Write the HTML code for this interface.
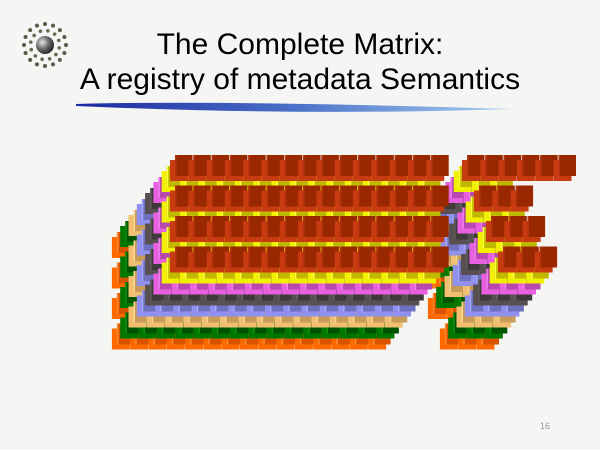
<!DOCTYPE html>
<html><head><meta charset="utf-8"><style>
html,body{margin:0;padding:0;background:#f5f5f3;width:600px;height:450px;overflow:hidden;font-family:"Liberation Sans",sans-serif}
.t{position:absolute;left:0;width:600px;text-align:center;font-size:30px;color:#000;line-height:33px}
</style></head><body>
<svg width="600" height="450" style="position:absolute;left:0;top:0">
<defs>
<radialGradient id="sp" cx="0.35" cy="0.35" r="0.7"><stop offset="0" stop-color="#e8e8e8"/><stop offset="0.5" stop-color="#707070"/><stop offset="1" stop-color="#202020"/></radialGradient>
<linearGradient id="sw" x1="0" x2="1"><stop offset="0" stop-color="#1c2aa0"/><stop offset="0.5" stop-color="#4a70c8"/><stop offset="1" stop-color="#a8d0f0"/></linearGradient>
</defs>
<g id="logo"></g>
<path d="M76 104 Q220 100 512 109 Q300 116 76 106 Z" fill="url(#sw)"/>
<g id="blocks"></g>
<text x="545" y="429" font-size="9" fill="#999" font-family="Liberation Sans" text-anchor="middle">16</text>
</svg>
<div class="t" style="top:28px">The Complete Matrix:</div>
<div class="t" style="top:63px">A registry of metadata Semantics</div>
<script>
var ns="http://www.w3.org/2000/svg";
function r(g,x,y,w,h,f){var e=document.createElementNS(ns,"rect");e.setAttribute("x",x);e.setAttribute("y",y);e.setAttribute("width",w);e.setAttribute("height",h);e.setAttribute("fill",f);g.appendChild(e);}
var lg=document.getElementById("logo");
function c(x,y,rr,f){var e=document.createElementNS(ns,"circle");e.setAttribute("cx",x);e.setAttribute("cy",y);e.setAttribute("r",rr);e.setAttribute("fill",f);lg.appendChild(e);}
for(var i=0;i<16;i++){var a=i/16*Math.PI*2;c(45+21*Math.cos(a),45+21*Math.sin(a),2,"#5a5a48");}
for(var i=0;i<12;i++){var a=i/12*Math.PI*2+0.2;c(45+14.5*Math.cos(a),45+14.5*Math.sin(a),1.8,"#6a6a50");}
c(45,45,9,"url(#sp)");
var g=document.getElementById("blocks");
var cols=[["#ff6a00","#d85400","#ff8a30"],["#007800","#005400","#109010"],["#f0c070","#c89c58","#f8d890"],["#9090f0","#7070c0","#a8a8ff"],["#585050","#3e3a3a","#686060"],["#e860e0","#b848b0","#f080f0"],["#f0f000","#c0b800","#ffff40"],["#c83a10","#992800","#b83410"]];
for(var L=7;L>=0;L--){
  var li=7-L;
  var ox=175-8.3*L, oy=155+11*L;
  var cl=cols[li];
  for(var row=0;row<4;row++){
    var y=oy+row*30.5;
    function b(x){r(g,x-5,y+5,18,21,cl[0]);r(g,x,y,17.5,21,cl[1]);r(g,x,y,1.5,21,cl[2]);}
    for(var k=0;k<15;k++)b(ox+k*18.3);
    var rx=467-8.3*L+12*row, rn=(li==7&&row==0)?6:3;
    for(var k=0;k<rn;k++)b(rx+k*18.3);
  }
}
</script>
</body></html>
